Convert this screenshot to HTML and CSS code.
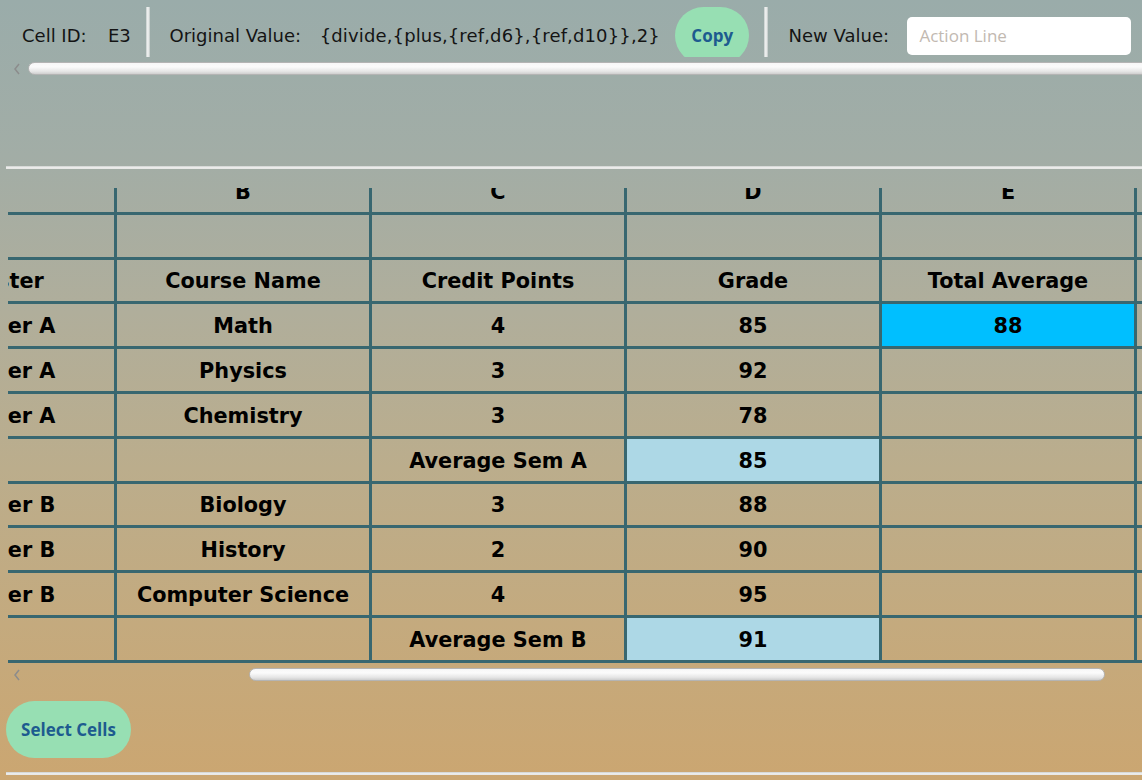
FILE: index.html
```html
<!DOCTYPE html>
<html lang="en">
<head>
<meta charset="utf-8">
<title>Sheet</title>
<link rel="stylesheet" href="styles.css">
</head>
<body>
<div class="page">
  <div class="toolbar-viewport">
    <div class="toolbar">
      <span class="label l-cell">Cell ID:</span>
      <span class="label v-cell">E3</span>
      <span class="vsep s1"></span>
      <span class="label l-orig">Original Value:</span>
      <span class="label v-orig">{divide,{plus,{ref,d6},{ref,d10}},2}</span>
      <button class="pill copy">Copy</button>
      <span class="vsep s2"></span>
      <span class="label l-new">New Value:</span>
      <input class="action" type="text" placeholder="Action Line">
    </div>
  </div>

  <div class="scrollbar top-bar">
    <svg class="arrow" width="8" height="12" viewBox="0 0 8 12"><path d="M6 1 L2 6 L6 11" fill="none" stroke="#8c8c8c" stroke-width="1.5"/></svg>
    <div class="thumb thumb-top"></div>
  </div>

  <div class="hline first"></div>

  <div class="sheet-viewport">
    <div class="sheet">
      <div class="cell">A</div><div class="cell">B</div><div class="cell">C</div><div class="cell">D</div><div class="cell">E</div><div class="cell">F</div>
      <div class="cell"></div><div class="cell"></div><div class="cell"></div><div class="cell"></div><div class="cell"></div><div class="cell"></div>
      <div class="cell">Semester</div><div class="cell">Course Name</div><div class="cell">Credit Points</div><div class="cell">Grade</div><div class="cell">Total Average</div><div class="cell"></div>
      <div class="cell">Semester A</div><div class="cell">Math</div><div class="cell">4</div><div class="cell">85</div><div class="cell hl">88</div><div class="cell"></div>
      <div class="cell">Semester A</div><div class="cell">Physics</div><div class="cell">3</div><div class="cell">92</div><div class="cell"></div><div class="cell"></div>
      <div class="cell">Semester A</div><div class="cell">Chemistry</div><div class="cell">3</div><div class="cell">78</div><div class="cell"></div><div class="cell"></div>
      <div class="cell"></div><div class="cell"></div><div class="cell">Average Sem A</div><div class="cell avg">85</div><div class="cell"></div><div class="cell"></div>
      <div class="cell">Semester B</div><div class="cell">Biology</div><div class="cell">3</div><div class="cell">88</div><div class="cell"></div><div class="cell"></div>
      <div class="cell">Semester B</div><div class="cell">History</div><div class="cell">2</div><div class="cell">90</div><div class="cell"></div><div class="cell"></div>
      <div class="cell">Semester B</div><div class="cell">Computer Science</div><div class="cell">4</div><div class="cell">95</div><div class="cell"></div><div class="cell"></div>
      <div class="cell"></div><div class="cell"></div><div class="cell">Average Sem B</div><div class="cell avg">91</div><div class="cell"></div><div class="cell"></div>
    </div>
  </div>

  <div class="scrollbar bottom-bar">
    <svg class="arrow" width="8" height="12" viewBox="0 0 8 12"><path d="M6 1 L2 6 L6 11" fill="none" stroke="#8c8c8c" stroke-width="1.5"/></svg>
    <div class="thumb thumb-bottom"></div>
  </div>

  <button class="pill select">Select Cells</button>

  <div class="hline last"></div>
</div>
</body>
</html>
```

FILE: styles.css
```css
* { box-sizing: border-box; }

html, body {
  margin: 0;
  padding: 0;
}

body {
  width: 1142px;
  height: 780px;
  overflow: hidden;
  background: linear-gradient(180deg, #9aacaa 0%, #a2ada6 20%, #b0ae9b 40%, #bbad8c 60%, #c4aa7e 80%, #cba671 100%);
  font-family: "DejaVu Sans", Verdana, sans-serif;
  color: #111;
}

.page {
  display: flex;
  flex-direction: column;
  align-items: flex-start;
  padding-left: 6px;
  width: 1142px;
  height: 780px;
}

/* toolbar */
.toolbar-viewport {
  width: 1136px;
  height: 57px;
  overflow: hidden;
}

.toolbar {
  display: flex;
  align-items: center;
  height: 64px;
  padding-top: 7px;
  padding-left: 16px;
  white-space: nowrap;
}

.label {
  font-size: 18px;
  line-height: 21px;
  color: #141414;
}

.v-cell { margin-left: 21.4px; }
.l-orig { margin-left: 19.7px; }
.v-orig { margin-left: 18.5px; letter-spacing: 0.14px; }
.l-new { margin-left: 20.3px; }

.vsep {
  align-self: stretch;
  width: 4px;
  background: linear-gradient(90deg, #c4cbca 0%, #eef0ef 40%, #e4e7e6 70%, #b8c0bf 100%);
}
.s1 { margin-left: 15px; }
.s2 { margin-left: 15px; }

.pill {
  border: none;
  background: #97dfb3;
  color: #1d5b8f;
  font-family: "Open Sans", "Noto Sans", sans-serif;
  font-weight: 700;
  font-size: 17px;
  height: 57px;
  border-radius: 29px;
  padding: 0;
  cursor: pointer;
}

.copy {
  width: 74px;
  margin-left: 15.3px;
  flex-shrink: 0;
}

.action {
  margin-left: 18.4px;
  width: 224px;
  height: 38px;
  border: none;
  border-radius: 5px;
  background: #ffffff;
  padding: 0 12px;
  font-family: "Open Sans", "Noto Sans", sans-serif;
  font-size: 17px;
  outline: none;
  flex-shrink: 0;
}
.action::placeholder { color: #c2b9b1; }

/* scrollbars */
.scrollbar {
  display: flex;
  align-items: center;
  width: 1136px;
  height: 13px;
  overflow: hidden;
}
.top-bar { margin-top: 5px; }
.bottom-bar { margin-top: 5px; }

.arrow {
  margin-left: 7px;
  flex-shrink: 0;
}

.thumb {
  height: 13px;
  border-radius: 7px;
  border: 1px solid #b4b4b4;
  background: linear-gradient(180deg, #f7f7f7 0%, #fbfbfb 35%, #e6e6e6 75%, #cfcfcf 100%);
  flex-shrink: 0;
}
.thumb-top {
  margin-left: 7px;
  width: 1130px;
}
.thumb-bottom {
  margin-left: 228px;
  width: 856px;
}

/* horizontal rules */
.hline {
  width: 1136px;
  height: 3px;
  background: linear-gradient(180deg, #cdd0ce 0%, #f1f1f0 60%, #e2e2e0 100%);
}
.first { margin-top: 91px; }
.last { margin-top: 14px; }

/* sheet */
.sheet-viewport {
  margin-top: 19px;
  margin-left: 2px;
  width: 1134px;
  height: 475px;
  overflow: hidden;
}

.sheet {
  display: grid;
  grid-template-columns: repeat(6, 255px);
  grid-auto-rows: 44.8px;
  margin-left: -146px;
  margin-top: -18px;
  width: 1530px;
}

.cell {
  display: flex;
  align-items: center;
  justify-content: center;
  padding-top: 2px;
  border-right: 3px solid #386770;
  border-bottom: 3px solid #386770;
  font-weight: 700;
  font-size: 20.8px;
  color: #000;
  white-space: nowrap;
  overflow: hidden;
}

.hl { background: #00bfff; }
.avg { background: #add8e6; }

.select {
  margin-top: 20px;
  width: 125px;
}
```
